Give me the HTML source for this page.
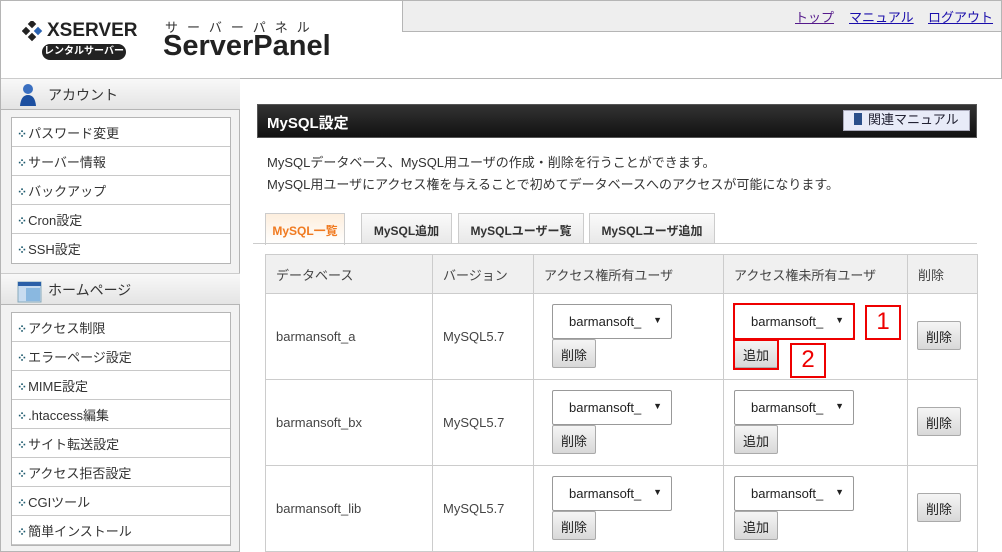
<!DOCTYPE html>
<html><head><meta charset="utf-8"><style>
*{margin:0;padding:0;box-sizing:border-box}
body{width:1002px;height:552px;overflow:hidden;background:#fff;font-family:"Liberation Sans","Noto Sans CJK JP",sans-serif;font-size:13px;color:#333;position:relative}
.a{position:absolute}
.hdr{left:0;top:0;width:1002px;height:79px;border:1px solid #b5b5b5;background:#fff}
.topbar{left:402px;top:0;width:600px;height:32px;background:#eee;border-left:1px solid #b5b5b5;border-bottom:1px solid #b5b5b5;border-top:1px solid #b5b5b5;border-right:1px solid #b5b5b5}
.topbar a{position:absolute;top:6px;font-size:13px;color:#1a0dab;text-decoration:underline}
.side{left:0;top:78px;width:240px;height:474px;background:#f2f2f2;border:1px solid #b5b5b5;border-top:none}
.sh{position:absolute;left:0;width:239px;height:32px;background:linear-gradient(#f8f8f8,#e4e4e4);border-top:1px solid #ccc;border-bottom:1px solid #b5b5b5;font-size:14px;color:#333;padding:6px 0 0 47px}
.box{position:absolute;left:10px;width:220px;background:#fff;border:1px solid #b5b5b5}
.box div{height:29px;border-bottom:1px solid #c8c8c8;padding:5px 0 0 5px;font-size:13px;color:#333}
.box div:before{content:"⁘";color:#1e5a6e;font-size:12px;font-weight:bold;margin-right:1px}
.title{left:257px;top:104px;width:720px;height:34px;background:linear-gradient(#333,#111);border:1px solid #555;color:#fff;font-weight:bold;font-size:15px;padding:7px 0 0 9px}
.man{left:843px;top:110px;width:127px;height:21px;background:#e8ebf8;border:1px solid #aab;color:#223;font-size:13px;line-height:18px;padding-left:10px}
.tab{position:absolute;top:213px;height:31px;border:1px solid #ccc;border-bottom:none;background:linear-gradient(#fafafa,#e8e8e8);font-weight:bold;font-size:12px;color:#333;text-align:center;padding-top:8px}
table{position:absolute;left:265px;top:254px;border-collapse:collapse}
td{border:1px solid #ccc;font-size:13px;color:#444;vertical-align:middle;padding-left:10px}
tr.h td{background:#f0f0f0;height:39px}
tr.r td{height:86px}
.sel{position:absolute;width:120px;height:35px;border:1px solid #999;border-radius:2px;background:#fff;font-size:13px;color:#222;padding:9px 0 0 16px}
.sel:after{content:"▼";position:absolute;right:9px;top:10px;font-size:9px}
.btn{position:absolute;width:44px;height:29px;border:1px solid #aaa;border-radius:2px;background:linear-gradient(#f5f5f5,#d8d8d8);font-size:13px;color:#222;text-align:center;padding-top:5px}
.red{position:absolute;border:2px solid #e00}
.num{position:absolute;border:2px solid #e00;color:#e00;font-size:24px;text-align:center;line-height:30px;width:36px;height:35px}
</style></head><body>
<div class="a hdr"></div>
<div class="a topbar"><a style="left:392px;color:#551a8b">トップ</a><a style="left:446px">マニュアル</a><a style="left:525px">ログアウト</a></div>
<svg class="a" style="left:22px;top:21px" width="22" height="22" viewBox="0 0 22 22"><rect x="7" y="0" width="6" height="6" transform="rotate(45 10 3)" fill="#222"/><rect x="1" y="7" width="6" height="6" transform="rotate(45 4 10)" fill="#222"/><rect x="13" y="7" width="6" height="6" transform="rotate(45 16 10)" fill="#2a62b0"/><rect x="7" y="13" width="6" height="6" transform="rotate(45 10 16)" fill="#222"/></svg>
<div class="a" style="left:47px;top:20px;font-size:19px;font-weight:bold;color:#222">XSERVER</div>
<div class="a" style="left:42px;top:44px;width:84px;height:16px;border-radius:8px;background:#222;color:#fff;font-size:10px;font-weight:bold;text-align:center;line-height:16px">レンタルサーバー</div>
<div class="a" style="left:165px;top:17px;font-size:13px;color:#333;letter-spacing:9px">サーバーパネル</div>
<div class="a" style="left:163px;top:30px;font-size:29px;font-weight:bold;color:#222">ServerPanel</div>
<div class="a side">
<div class="sh" style="top:0">アカウント</div>
<svg class="a" style="left:18px;top:5px" width="18" height="24"><circle cx="9" cy="6" r="5" fill="#3a6fc0"/><path d="M1 23 Q2 12 9 12 Q16 12 17 23Z" fill="#1c4fa0"/></svg>
<div class="box" style="top:39px"><div>パスワード変更</div><div>サーバー情報</div><div>バックアップ</div><div>Cron設定</div><div style="border:none">SSH設定</div></div>
<div class="sh" style="top:195px">ホームページ</div>
<svg class="a" style="left:16px;top:203px" width="26" height="22"><rect x="1" y="1" width="23" height="20" fill="#c8dcf0" stroke="#8ab"/><rect x="1" y="1" width="23" height="4" fill="#2a5fa8"/><rect x="9" y="7" width="14" height="13" fill="#8ab8e0"/></svg>
<div class="box" style="top:234px"><div>アクセス制限</div><div>エラーページ設定</div><div>MIME設定</div><div>.htaccess編集</div><div>サイト転送設定</div><div>アクセス拒否設定</div><div>CGIツール</div><div>簡単インストール</div></div>
</div>
<div class="a title">MySQL設定</div>
<div class="a man"><span style="display:inline-block;width:8px;height:12px;background:#2a4f8a;margin-right:6px;vertical-align:-1px"></span>関連マニュアル</div>
<div class="a" style="left:267px;top:152px;line-height:22px;font-size:13px;color:#333">MySQLデータベース、MySQL用ユーザの作成・削除を行うことができます。<br>MySQL用ユーザにアクセス権を与えることで初めてデータベースへのアクセスが可能になります。</div>
<div class="tab" style="left:265px;width:80px;color:#f07a20;background:linear-gradient(#fdeedd,#fff);height:32px">MySQL一覧</div>
<div class="tab" style="left:361px;width:91px">MySQL追加</div>
<div class="tab" style="left:458px;width:126px">MySQLユーザー覧</div>
<div class="tab" style="left:589px;width:126px">MySQLユーザ追加</div>
<div class="a" style="left:253px;top:243px;width:724px;height:1px;background:#ccc"></div>
<table>
<tr class="h"><td style="width:167px">データベース</td><td style="width:101px">バージョン</td><td style="width:190px">アクセス権所有ユーザ</td><td style="width:184px">アクセス権未所有ユーザ</td><td style="width:70px">削除</td></tr>
<tr class="r"><td>barmansoft_a</td><td>MySQL5.7</td><td></td><td></td><td></td></tr>
<tr class="r"><td>barmansoft_bx</td><td>MySQL5.7</td><td></td><td></td><td></td></tr>
<tr class="r"><td>barmansoft_lib</td><td>MySQL5.7</td><td></td><td></td><td></td></tr>
</table>
<div class="sel" style="left:552px;top:304px">barmansoft_</div><div class="btn" style="left:552px;top:339px">削除</div>
<div class="sel" style="left:734px;top:304px">barmansoft_</div><div class="btn" style="left:734px;top:339px">追加</div>
<div class="btn" style="left:917px;top:321px">削除</div>
<div class="sel" style="left:552px;top:390px">barmansoft_</div><div class="btn" style="left:552px;top:425px">削除</div>
<div class="sel" style="left:734px;top:390px">barmansoft_</div><div class="btn" style="left:734px;top:425px">追加</div>
<div class="btn" style="left:917px;top:407px">削除</div>
<div class="sel" style="left:552px;top:476px">barmansoft_</div><div class="btn" style="left:552px;top:511px">削除</div>
<div class="sel" style="left:734px;top:476px">barmansoft_</div><div class="btn" style="left:734px;top:511px">追加</div>
<div class="btn" style="left:917px;top:493px">削除</div>
<div class="red" style="left:733px;top:303px;width:122px;height:37px"></div>
<div class="red" style="left:733px;top:339px;width:46px;height:31px"></div>
<div class="num" style="left:865px;top:305px">1</div>
<div class="num" style="left:790px;top:343px">2</div>
</body></html>
